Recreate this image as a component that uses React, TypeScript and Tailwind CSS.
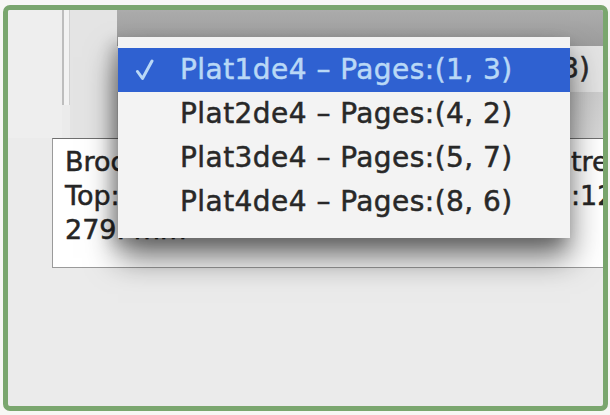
import React from 'react';

const items = [
  { label: 'Plat1de4 – Pages:(1, 3)', selected: true },
  { label: 'Plat2de4 – Pages:(4, 2)', selected: false },
  { label: 'Plat3de4 – Pages:(5, 7)', selected: false },
  { label: 'Plat4de4 – Pages:(8, 6)', selected: false },
];

export default function App() {
  return (
    <div className="relative w-[610px] h-[415px] bg-[#f7f7f5] pt-[5px] pl-[3px] overflow-hidden font-['DejaVu_Sans',sans-serif] [-webkit-text-stroke:0.5px_currentColor]">
      {/* window frame */}
      <div className="w-[605px] h-[406px] border-[5px] border-[#7aa66e] rounded-[7px] bg-[#ebebeb] overflow-hidden">
        <div className="flex h-[128px]">
          {/* left strip with split bar */}
          <div className="w-[109px] flex">
            <div className="w-[54px] bg-[#eeeeee]" />
            <div className="w-[2px] h-[95px] bg-[#bdbdbd]" />
            <div className="w-[5px] h-[95px] bg-[#f2f2f2]" />
            <div className="w-[1px] h-[95px] bg-[#d0d0d0]" />
            <div className="flex-1 bg-[#e4e4e4]" />
          </div>
          {/* popup button behind */}
          <div className="flex-1 flex flex-col">
            <div className="h-[36px] bg-gradient-to-b from-[#acacac] to-[#9c9c9c]" />
            <div className="h-[46px] bg-[#e3e3e3] flex items-center justify-end pr-[13px] text-[28px] text-[#2b2b2b]">
              (1, 3)
            </div>
            <div className="flex-1 bg-gradient-to-b from-[#cdcdcd] to-[#d6d6d6]" />
          </div>
        </div>
        {/* info box */}
        <div className="ml-[44px] w-[570px] h-[130px] bg-white border border-[#9a9a9a] border-t-[#6f6f6f] pt-[6px] pl-[12px] flex text-[27px] leading-[34px] text-[#262626]">
          <div className="flex-1 flex flex-col">
            <span>Brochure</span>
            <span>Top: 0</span>
            <span>279. mm</span>
          </div>
          <div className="w-[50px] flex flex-col">
            <span>tre</span>
            <span>:12</span>
          </div>
        </div>
      </div>

      {/* popup menu */}
      <div className="absolute left-[118px] top-[37px] w-[452px] h-[201px] bg-[#f3f3f3] pt-[11px] shadow-[0_20px_30px_rgba(0,0,0,0.55),-6px_6px_14px_rgba(0,0,0,0.2)] text-[28px] tracking-[0.45px]">
        {items.map(item => (
          <div
            key={item.label}
            className={
              item.selected
                ? 'h-[44px] flex items-center pl-[17px] bg-[#2f61d1] text-[#b9d8f6]'
                : 'h-[44px] flex items-center pl-[17px] text-[#282828]'
            }
          >
            <span className="w-[45px] flex items-center">
              {item.selected && (
                <svg width="20" height="22" viewBox="0 0 20 22" fill="none">
                  <path d="M2.5 12.5 L7.5 19.5 L17 2" stroke="currentColor" strokeWidth="3" strokeLinecap="round" strokeLinejoin="round" />
                </svg>
              )}
            </span>
            <span>{item.label}</span>
          </div>
        ))}
      </div>
    </div>
  );
}
